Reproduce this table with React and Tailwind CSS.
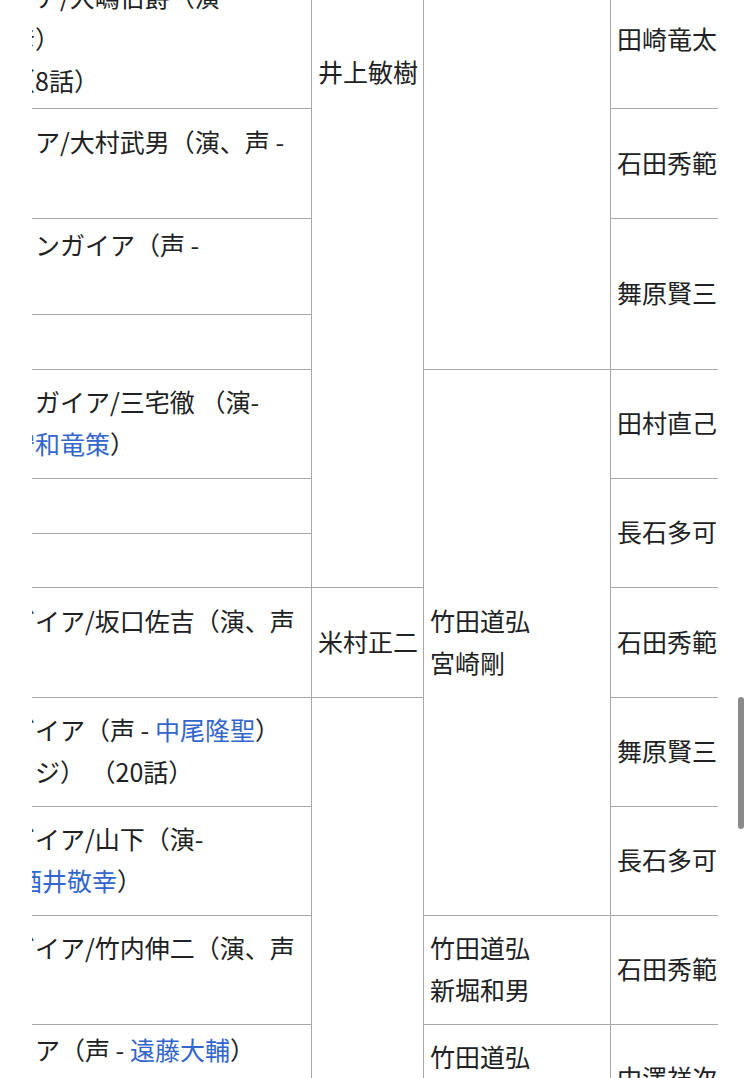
import React, { useLayoutEffect, useRef } from "react";

// 表の線の色
const line = "border-[#a8a8a8]";

// 左に隠れた全角スペース
const gap = "\u3000";

const Cell = ({ pos, pad = "pb-[4px]", children }) => (
  <div className={`flex items-center border-b border-r ${line} px-[6px] ${pad} whitespace-nowrap ${pos}`}>
    <div>{children}</div>
  </div>
);

const Link = ({ children, className = "" }) => (
  <a className={`text-[#3366cc] ${className}`}>{children}</a>
);

const App = () => {
  const pageRef = useRef(null);
  const tableRef = useRef(null);

  // スクロール位置を再現
  useLayoutEffect(() => {
    if (pageRef.current) pageRef.current.scrollTop = 442;
    if (tableRef.current) tableRef.current.scrollLeft = 28;
  }, []);

  return (
    <div className="relative h-screen overflow-hidden bg-white">
      <div ref={pageRef} className="h-full overflow-hidden">
        <div ref={tableRef} className="mx-8 overflow-hidden">
          <div className="grid w-[747px] grid-cols-[308px_112px_187px_140px] grid-rows-[413px_138px_110px_96px_55px_109px_55px_54px_110px_109px_109px_109px_109px_436px] font-['Noto_Sans_CJK_JP',sans-serif] text-[25px] leading-[42px] text-[#202122]">
            {/* 1列目：登場人物・ゲスト */}
            <Cell pos="col-start-1 row-start-1">ガイア/藤宮</Cell>
            <Cell pos="col-start-1 row-start-2">
              イア/大嶋伯爵（演
              <br />
              彦）
              <br />
              （8話）
            </Cell>
            <Cell pos="col-start-1 row-start-3">
              {gap}ア/大村武男（演、声 -
              <br />）
            </Cell>
            <Cell pos="col-start-1 row-start-4">
              {gap}ンガイア（声 -
              <br />）
            </Cell>
            <Cell pos="col-start-1 row-start-5" />
            <Cell pos="col-start-1 row-start-6">
              {gap}ガイア/三宅徹 （演-
              <br />
              <Link>安和竜策</Link>）
            </Cell>
            <Cell pos="col-start-1 row-start-7" />
            <Cell pos="col-start-1 row-start-8" />
            <Cell pos="col-start-1 row-start-9">
              ガイア/坂口佐吉（演、声
              <br />）
            </Cell>
            <Cell pos="col-start-1 row-start-10">
              ガイア（声 - <Link>中尾隆聖</Link>）
              <br />
              ッジ） （20話）
            </Cell>
            <Cell pos="col-start-1 row-start-11">
              ガイア/山下（演-
              <br />
              <Link className="ml-[7px]">酒井敬幸</Link>）
            </Cell>
            <Cell pos="col-start-1 row-start-12">
              ガイア/竹内伸二（演、声
              <br />）
            </Cell>
            <Cell pos="col-start-1 row-start-13" pad="pb-[18px]">
              {gap}ア（声 - <Link>遠藤大輔</Link>）
              <br />
              （23話）
            </Cell>
            <Cell pos="col-start-1 row-start-14" />

            {/* 2列目：脚本 */}
            <Cell pos="col-start-2 row-start-1 row-span-8">井上敏樹</Cell>
            <Cell pos="col-start-2 row-start-9">米村正二</Cell>
            <Cell pos="col-start-2 row-start-10 row-span-5">右田昌万</Cell>

            {/* 3列目：特技監督 */}
            <Cell pos="col-start-3 row-start-1 row-span-5">
              佐川和夫
              <br />
              神澤信一
            </Cell>
            <Cell pos="col-start-3 row-start-6 row-span-6">
              竹田道弘
              <br />
              宮崎剛
            </Cell>
            <Cell pos="col-start-3 row-start-12">
              竹田道弘
              <br />
              新堀和男
            </Cell>
            <Cell pos="col-start-3 row-start-13">
              竹田道弘
              <br />
              宮崎剛
            </Cell>
            <Cell pos="col-start-3 row-start-14" />

            {/* 4列目：監督 */}
            <Cell pos="col-start-4 row-start-1">石田秀範</Cell>
            <Cell pos="col-start-4 row-start-2">田崎竜太</Cell>
            <Cell pos="col-start-4 row-start-3">石田秀範</Cell>
            <Cell pos="col-start-4 row-start-4 row-span-2">舞原賢三</Cell>
            <Cell pos="col-start-4 row-start-6">田村直己</Cell>
            <Cell pos="col-start-4 row-start-7 row-span-2">長石多可男</Cell>
            <Cell pos="col-start-4 row-start-9">石田秀範</Cell>
            <Cell pos="col-start-4 row-start-10">舞原賢三</Cell>
            <Cell pos="col-start-4 row-start-11">長石多可男</Cell>
            <Cell pos="col-start-4 row-start-12">石田秀範</Cell>
            <Cell pos="col-start-4 row-start-13">中澤祥次郎</Cell>
            <Cell pos="col-start-4 row-start-14" />
          </div>
        </div>
      </div>

      {/* スクロールバー */}
      <div className="absolute right-[6px] top-[697px] h-[132px] w-[6px] rounded-full bg-[#8a8a8a]" />
    </div>
  );
};

export default App;
